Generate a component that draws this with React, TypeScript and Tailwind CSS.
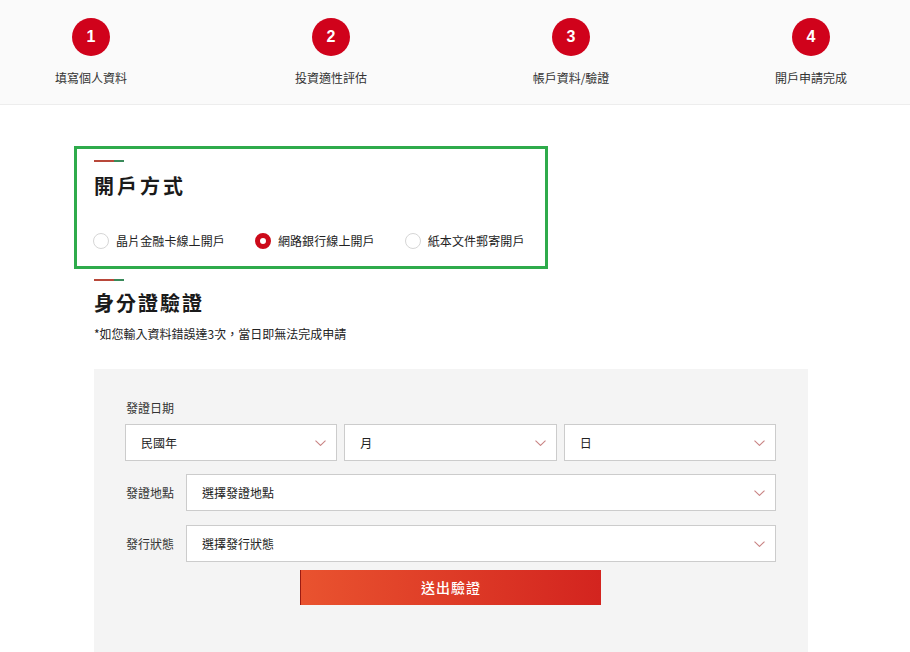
import { useState } from "react";

const steps = ["填寫個人資料", "投資適性評估", "帳戶資料/驗證", "開戶申請完成"];

const methods = ["晶片金融卡線上開戶", "網路銀行線上開戶", "紙本文件郵寄開戶"];

function Chevron() {
  return (
    <svg width="11" height="6" viewBox="0 0 11 6" fill="none">
      <path d="M0.5 0.6L5.5 5.4L10.5 0.6" stroke="#c98484" strokeWidth="1.1" />
    </svg>
  );
}

function SelectBox({ text, className = "" }: { text: string; className?: string }) {
  return (
    <div
      className={`h-[37px] bg-white border border-[#cccccc] flex items-center justify-between pl-[15px] pr-[10px] text-[12px] text-[#222] ${className}`}
    >
      <span>{text}</span>
      <Chevron />
    </div>
  );
}

function SectionLine() {
  return (
    <div className="flex h-[2px] w-[30px]">
      <div className="w-[20px] bg-[#b8483a]" />
      <div className="w-[10px] bg-[#3a8a5a]" />
    </div>
  );
}

export default function App() {
  const [method, setMethod] = useState(1);

  return (
    <div className="min-h-screen bg-white text-[#222] font-['Noto_Sans_CJK_TC','Liberation_Sans',sans-serif]">
      {/* steps */}
      <div className="h-[105px] bg-[#fafafa] border-b border-[#ededed] flex pl-[31px] gap-[120px] pt-[18px]">
        {steps.map((s, i) => (
          <div key={s} className="w-[120px] flex flex-col items-center">
            <div className="w-[38px] h-[38px] rounded-full bg-[#d0021b] text-white flex items-center justify-center text-[16px] font-bold font-['Liberation_Sans',sans-serif]">
              {i + 1}
            </div>
            <div className="mt-[14px] text-[12px] leading-[16px] text-[#333]">{s}</div>
          </div>
        ))}
      </div>

      {/* 開戶方式 */}
      <div className="mt-[41px] ml-[74px] w-[474px] border-[3px] border-[#2eab4b] pt-[11px] pb-[17px] pl-[17px]">
        <SectionLine />
        <div className="mt-[10px] text-[20px] leading-[28px] font-semibold tracking-[3px] text-[#1a1a1a]">開戶方式</div>
        <div className="mt-[33px] flex items-center -ml-[1px]">
          {methods.map((m, i) => (
            <button
              key={m}
              onClick={() => setMethod(i)}
              className={`flex items-center ${i > 0 ? "ml-[30px]" : ""}`}
            >
              <span
                className={`w-[16px] h-[16px] rounded-full ${
                  method === i ? "border-[5px] border-[#cc0a1a] bg-white" : "border border-[#d6d6d6] bg-white"
                }`}
              />
              <span className="ml-[7px] text-[12px] leading-[16px] tracking-[0.1px] text-[#222]">{m}</span>
            </button>
          ))}
        </div>
      </div>

      {/* 身分證驗證 */}
      <div className="ml-[94px] w-[714px] mt-[10px]">
        <SectionLine />
        <div className="mt-[8px] text-[20px] leading-[28px] font-bold tracking-[2px] text-[#1a1a1a]">身分證驗證</div>
        <div className="mt-[8px] text-[12px] leading-[18px] text-[#222]">*如您輸入資料錯誤達3次，當日即無法完成申請</div>

        <div className="mt-[26px] bg-[#f4f4f4] pl-[31px] pr-[32px] pt-[30px] pb-[50px]">
          <div className="pl-[1px] text-[12px] leading-[18px] text-[#333]">發證日期</div>
          <div className="mt-[7px] grid grid-cols-3 gap-[7px]">
            <SelectBox text="民國年" />
            <SelectBox text="月" />
            <SelectBox text="日" />
          </div>
          <div className="mt-[13px] flex items-center">
            <div className="w-[61px] pl-[1px] text-[12px] text-[#333]">發證地點</div>
            <SelectBox text="選擇發證地點" className="flex-1" />
          </div>
          <div className="mt-[14px] flex items-center">
            <div className="w-[61px] pl-[1px] text-[12px] text-[#333]">發行狀態</div>
            <SelectBox text="選擇發行狀態" className="flex-1" />
          </div>
          <div className="mt-[8px] flex justify-center">
            <button className="w-[301px] h-[35px] border-l border-[#9c1b12] bg-[linear-gradient(90deg,#e9532f,#d3241f)] text-white text-[14px] font-medium tracking-[1px]">
              送出驗證
            </button>
          </div>
        </div>
      </div>
    </div>
  );
}
